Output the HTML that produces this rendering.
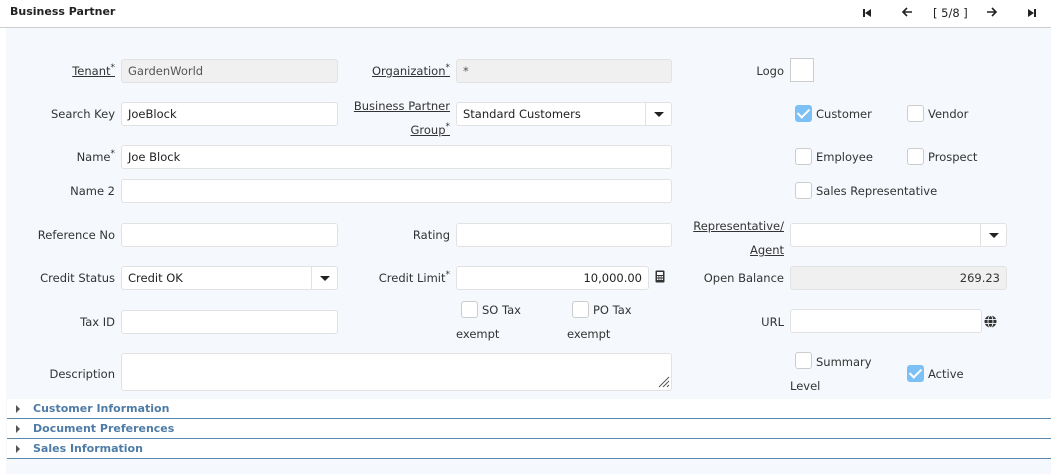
<!DOCTYPE html><html><head><style>
*{box-sizing:border-box;margin:0;padding:0}
body{width:1051px;height:474px;overflow:hidden;background:#fff;font-family:"DejaVu Sans","Liberation Sans",sans-serif;font-size:11.5px;color:#333;position:relative}
#hd{position:absolute;left:0;top:0;width:1051px;height:28px;background:#fff;border-bottom:1px solid #ccc}
#bd{position:absolute;left:6px;top:28px;width:1045px;height:446px;background:#f5f8fc}
.t{position:absolute;font-weight:bold;font-size:11px;left:10px;top:5px;color:#222}
.l{position:absolute;text-align:right;white-space:nowrap;line-height:16px}
.u{text-decoration:underline}
sup{font-size:9px;vertical-align:top;position:relative;top:-3px}
.i{position:absolute;height:24px;background:#fff;border:1px solid #e2e2e2;border-radius:3px;padding:0 6px;line-height:22px;color:#222}
.g{background:#f0f0f0;color:#555}
.sel::after{content:"";position:absolute;right:0;top:0;width:25px;height:22px;border-left:1px solid #e2e2e2}
.ar{position:absolute;right:7px;top:9px;width:0;height:0;border-left:5px solid transparent;border-right:5px solid transparent;border-top:5px solid #222;z-index:2}
.cb{position:absolute;width:17px;height:17px;background:#fff;border:1px solid #ccc;border-radius:3px}
.ck{background:#7cc0f6;border-color:#7cc0f6}
.ck::after{content:"";position:absolute;left:4px;top:0px;width:5px;height:10px;border:solid #fff;border-width:0 2px 2px 0;transform:rotate(45deg)}
.sec{position:absolute;left:7px;width:1044px;height:20px;background:#fff;border-bottom:1px solid #5a87ad;color:#4e7ca6;font-weight:bold;font-size:11px;line-height:20px;padding-left:26px}
.sec::before{content:"";position:absolute;left:9px;top:6px;border-top:4px solid transparent;border-bottom:4px solid transparent;border-left:4px solid #555}
.nav{position:absolute;top:6px;font-size:12px;color:#222}
</style></head><body>
<div id="hd"><div class="t">Business Partner</div>
<div class="nav" style="left:862px;top:7px"><svg width="10" height="10"><rect x="1" y="1" width="2" height="8" fill="#222"/><path d="M9 1L3 5L9 9Z" fill="#222"/></svg></div>
<div class="nav" style="left:901px;top:6px"><svg width="12" height="12"><path d="M11 6H2M6 2L2 6L6 10" stroke="#222" stroke-width="1.6" fill="none"/></svg></div>
<div class="nav" style="left:933px;font-size:11.5px">[ 5/8 ]</div>
<div class="nav" style="left:986px;top:6px"><svg width="12" height="12"><path d="M1 6H10M6 2L10 6L6 10" stroke="#222" stroke-width="1.6" fill="none"/></svg></div>
<div class="nav" style="left:1027px;top:7px"><svg width="10" height="10"><path d="M1 1L7 5L1 9Z" fill="#222"/><rect x="7" y="1" width="2" height="8" fill="#222"/></svg></div>
</div>
<div id="bd"></div>
<div class="l u" style="right:936px;top:63px">Tenant<sup>*</sup></div>
<div class="i g" style="left:121px;top:59px;width:217px">GardenWorld</div>
<div class="l u" style="right:601px;top:63px">Organization<sup>*</sup></div>
<div class="i g" style="left:456px;top:59px;width:216px">*</div>
<div class="l" style="right:267px;top:63px">Logo</div>
<div class="i" style="left:790px;top:58px;width:24px;height:24px;border-color:#ccc;border-radius:0"></div>

<div class="l" style="right:936px;top:106px">Search Key</div>
<div class="i" style="left:121px;top:102px;width:217px">JoeBlock</div>
<div class="l u" style="right:601px;top:94px;line-height:24px">Business Partner<br>Group<sup>*</sup></div>
<div class="i sel" style="left:456px;top:102px;width:216px">Standard Customers<span class="ar"></span></div>
<div class="cb ck" style="left:795px;top:105px"></div><div class="l" style="left:816px;top:106px">Customer</div>
<div class="cb" style="left:907px;top:105px"></div><div class="l" style="left:928px;top:106px">Vendor</div>

<div class="l" style="right:936px;top:149px">Name<sup>*</sup></div>
<div class="i" style="left:121px;top:145px;width:551px">Joe Block</div>
<div class="cb" style="left:795px;top:148px"></div><div class="l" style="left:816px;top:149px">Employee</div>
<div class="cb" style="left:907px;top:148px"></div><div class="l" style="left:928px;top:149px">Prospect</div>

<div class="l" style="right:936px;top:183px">Name 2</div>
<div class="i" style="left:121px;top:179px;width:551px"></div>
<div class="cb" style="left:795px;top:182px"></div><div class="l" style="left:816px;top:183px">Sales Representative</div>

<div class="l" style="right:936px;top:227px">Reference No</div>
<div class="i" style="left:121px;top:223px;width:217px"></div>
<div class="l" style="right:601px;top:227px">Rating</div>
<div class="i" style="left:456px;top:223px;width:216px"></div>
<div class="l u" style="right:267px;top:214px;line-height:24px">Representative/<br>Agent</div>
<div class="i sel" style="left:790px;top:223px;width:217px"><span class="ar"></span></div>

<div class="l" style="right:936px;top:270px">Credit Status</div>
<div class="i sel" style="left:121px;top:266px;width:217px">Credit OK<span class="ar"></span></div>
<div class="l" style="right:601px;top:270px">Credit Limit<sup>*</sup></div>
<div class="i" style="left:456px;top:266px;width:193px;text-align:right">10,000.00</div>
<svg style="position:absolute;left:655px;top:270px" width="10" height="13"><rect x="0.5" y="0.5" width="9" height="12" rx="1" fill="#333"/><rect x="2" y="2" width="6" height="3" fill="#f5f8fc"/><g fill="#f5f8fc"><rect x="2" y="6" width="1.5" height="1.5"/><rect x="4.3" y="6" width="1.5" height="1.5"/><rect x="6.5" y="6" width="1.5" height="1.5"/><rect x="2" y="8.5" width="1.5" height="1.5"/><rect x="4.3" y="8.5" width="1.5" height="1.5"/><rect x="6.5" y="8.5" width="1.5" height="1.5"/></g></svg>
<div class="l" style="right:267px;top:270px">Open Balance</div>
<div class="i g" style="left:790px;top:266px;width:217px;text-align:right;color:#333">269.23</div>

<div class="cb" style="left:461px;top:301px"></div><div class="l" style="left:482px;top:302px">SO Tax</div>
<div class="l" style="left:456px;top:326px">exempt</div>
<div class="cb" style="left:572px;top:301px"></div><div class="l" style="left:593px;top:302px">PO Tax</div>
<div class="l" style="left:567px;top:326px">exempt</div>
<div class="l" style="right:936px;top:314px">Tax ID</div>
<div class="i" style="left:121px;top:310px;width:217px"></div>
<div class="l" style="right:267px;top:314px">URL</div>
<div class="i" style="left:790px;top:309px;width:192px"></div>
<svg style="position:absolute;left:984px;top:315px" width="13" height="13"><circle cx="6.5" cy="6.5" r="6" fill="#333"/><g stroke="#f5f8fc" stroke-width="0.9" fill="none"><ellipse cx="6.5" cy="6.5" rx="2.5" ry="6"/><line x1="0.5" y1="4.5" x2="12.5" y2="4.5"/><line x1="0.5" y1="8.5" x2="12.5" y2="8.5"/></g></svg>

<div class="l" style="right:936px;top:366px">Description</div>
<div class="i" style="left:121px;top:353px;width:551px;height:38px"></div>
<svg style="position:absolute;left:656px;top:374px" width="14" height="14"><path d="M13 3L3 13M13 7L7 13M13 11L11 13" stroke="#555" stroke-width="1"/></svg>
<div class="cb" style="left:795px;top:352px"></div><div class="l" style="left:816px;top:354px">Summary</div>
<div class="l" style="left:790px;top:378px">Level</div>
<div class="cb ck" style="left:907px;top:365px"></div><div class="l" style="left:928px;top:366px">Active</div>

<div class="sec" style="top:399px">Customer Information</div>
<div class="sec" style="top:419px">Document Preferences</div>
<div class="sec" style="top:439px">Sales Information</div>
</body></html>
